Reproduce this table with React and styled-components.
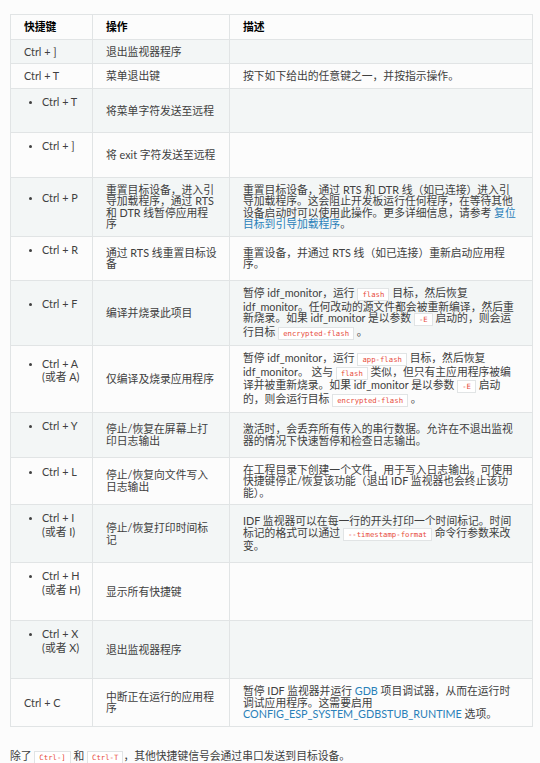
import styled, { createGlobalStyle } from "styled-components";

const GlobalStyle = createGlobalStyle`
  body {
    margin: 0;
    background: #fcfcfc;
  }
`;

const Page = styled.div`
  padding: 14px 8px 0 10px;
  font-family: Lato, "Noto Sans CJK SC", sans-serif;
  font-size: 10.8px;
  line-height: 11.5px;
  color: #404040;
`;

const Table = styled.table`
  width: 522px;
  table-layout: fixed;
  border-collapse: collapse;
  border: 1px solid #e1e4e5;
`;

const Col = styled.col`
  width: ${(props) => props.$w}px;
`;

const Row = styled.tr`
  background: ${(props) => (props.$striped ? "#f3f6f6" : "transparent")};
`;

const HeadCell = styled.th`
  padding: 6px 12px 6px 13px;
  text-align: left;
  font-weight: bold;
  color: #000;
  border: 1px solid #e1e4e5;
`;

const Cell = styled.td`
  padding: 6px 12px 6px 13px;
  vertical-align: middle;
  border: 1px solid #e1e4e5;
`;

const KeyList = styled.ul`
  margin: 0 0 18px 0;
  padding-left: 18px;
  list-style: disc;
  line-height: 13.5px;
  white-space: nowrap;

  li::marker {
    font-size: 9px;
  }
`;

const Code = styled.code`
  font-family: "DejaVu Sans Mono", monospace;
  font-size: 7.3px;
  line-height: 10.5px;
  color: #e74c3c;
  background: #fff;
  border: 1px solid #e1e4e5;
  padding: 1px 4px;
`;

const Link = styled.a`
  color: #2980b9;
  text-decoration: none;
`;

const Note = styled.p`
  margin: 23px 0 0;
`;

const rows = [
  { key: "Ctrl + ]", action: "退出监视器程序", desc: null },
  { key: "Ctrl + T", action: "菜单退出键", desc: "按下如下给出的任意键之一，并按指示操作。" },
  { key: "Ctrl + T", sub: true, action: "将菜单字符发送至远程", desc: null },
  { key: "Ctrl + ]", sub: true, action: "将 exit 字符发送至远程", desc: null },
  {
    key: "Ctrl + P",
    sub: true,
    action: "重置目标设备，进入引导加载程序，通过 RTS 和 DTR 线暂停应用程序",
    desc: (
      <>
        重置目标设备，通过 RTS 和 DTR 线（如已连接）进入引导加载程序。这会阻止开发板运行任何程序，在等待其他设备启动时可以使用此操作。更多详细信息，请参考{" "}
        <Link href="#">复位目标到引导加载程序</Link>。
      </>
    ),
  },
  {
    key: "Ctrl + R",
    sub: true,
    action: (
      <>
        通过 RTS 线重置目标设
        <br />备
      </>
    ),
    desc: "重置设备，并通过 RTS 线（如已连接）重新启动应用程序。",
  },
  {
    key: "Ctrl + F",
    sub: true,
    action: "编译并烧录此项目",
    desc: (
      <>
        暂停 idf_monitor，运行 <Code>flash</Code> 目标，然后恢复 idf_monitor。任何改动的源文件都会被重新编译，然后重新烧录。如果 idf_monitor 是以参数 <Code>-E</Code> 启动的，则会运行目标 <Code>encrypted-flash</Code> 。
      </>
    ),
  },
  {
    key: "Ctrl + A",
    alt: "(或者 A)",
    sub: true,
    action: "仅编译及烧录应用程序",
    desc: (
      <>
        暂停 idf_monitor，运行 <Code>app-flash</Code> 目标，然后恢复 idf_monitor。 这与 <Code>flash</Code> 类似，但只有主应用程序被编译并被重新烧录。如果 idf_monitor 是以参数 <Code>-E</Code> 启动的，则会运行目标 <Code>encrypted-flash</Code> 。
      </>
    ),
  },
  {
    key: "Ctrl + Y",
    sub: true,
    action: "停止/恢复在屏幕上打印日志输出",
    desc: "激活时，会丢弃所有传入的串行数据。允许在不退出监视器的情况下快速暂停和检查日志输出。",
  },
  {
    key: "Ctrl + L",
    sub: true,
    action: "停止/恢复向文件写入日志输出",
    desc: "在工程目录下创建一个文件，用于写入日志输出。可使用快捷键停止/恢复该功能（退出 IDF 监视器也会终止该功能）。",
  },
  {
    key: "Ctrl + I",
    alt: "(或者 I)",
    sub: true,
    action: "停止/恢复打印时间标记",
    desc: (
      <>
        IDF 监视器可以在每一行的开头打印一个时间标记。时间标记的格式可以通过 <Code>--timestamp-format</Code> 命令行参数来改变。
      </>
    ),
  },
  { key: "Ctrl + H", alt: "(或者 H)", sub: true, action: "显示所有快捷键", desc: null },
  { key: "Ctrl + X", alt: "(或者 X)", sub: true, action: "退出监视器程序", desc: null },
  {
    key: "Ctrl + C",
    action: "中断正在运行的应用程序",
    desc: (
      <>
        暂停 IDF 监视器并运行 <Link href="#">GDB</Link> 项目调试器，从而在运行时调试应用程序。这需要启用{" "}
        <Link href="#">CONFIG_ESP_SYSTEM_GDBSTUB_RUNTIME</Link> 选项。
      </>
    ),
  },
];

const App = () => {
  return (
    <Page>
      <GlobalStyle />
      <Table>
        <colgroup>
          <Col $w={82} />
          <Col $w={137} />
          <Col $w={303} />
        </colgroup>
        <thead>
          <tr>
            <HeadCell>快捷键</HeadCell>
            <HeadCell>操作</HeadCell>
            <HeadCell>描述</HeadCell>
          </tr>
        </thead>
        <tbody>
          {rows.map((row, i) => (
            <Row key={i} $striped={i % 2 === 0}>
              <Cell>
                {row.sub ? (
                  <KeyList>
                    <li>
                      {row.key}
                      {row.alt && (
                        <>
                          <br />
                          {row.alt}
                        </>
                      )}
                    </li>
                  </KeyList>
                ) : (
                  row.key
                )}
              </Cell>
              <Cell>{row.action}</Cell>
              <Cell>{row.desc}</Cell>
            </Row>
          ))}
        </tbody>
      </Table>
      <Note>
        除了 <Code>Ctrl-]</Code> 和 <Code>Ctrl-T</Code>，其他快捷键信号会通过串口发送到目标设备。
      </Note>
    </Page>
  );
};

export default App;
